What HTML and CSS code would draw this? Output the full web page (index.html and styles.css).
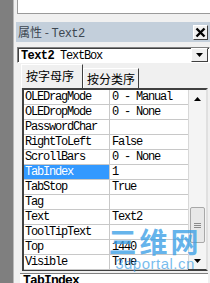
FILE: index.html
```html
<!DOCTYPE html>
<html>
<head>
<meta charset="utf-8">
<link rel="stylesheet" href="styles.css">
</head>
<body>
<div class="app">
  <div class="strip"></div>
  <div class="panel">
    <div class="topbox"></div>
    <div class="titlebar">
      <span class="title">属性 - <span class="mono">Text2</span></span>
      <span class="close"><svg width="11" height="11" viewBox="0 0 11 11"><path d="M1.5 1.5 L9.5 9.5 M9.5 1.5 L1.5 9.5" stroke="#000" stroke-width="2.4"/></svg></span>
    </div>
    <div class="combo">
      <span class="combotext"><b>Text2</b> TextBox</span>
      <span class="drop"><svg width="7" height="4" viewBox="0 0 7 4"><path d="M0 0 H7 L3.5 4 Z" fill="#000"/></svg></span>
    </div>
    <div class="tabs">
      <span class="tab active">按字母序</span>
      <span class="tab">按分类序</span>
    </div>
    <div class="grid">
      <div class="rows">
        <div class="row"><span class="name">OLEDragMode</span><span class="val">0 - Manual</span></div>
        <div class="row"><span class="name">OLEDropMode</span><span class="val">0 - None</span></div>
        <div class="row"><span class="name">PasswordChar</span><span class="val"></span></div>
        <div class="row"><span class="name">RightToLeft</span><span class="val">False</span></div>
        <div class="row"><span class="name">ScrollBars</span><span class="val">0 - None</span></div>
        <div class="row"><span class="name sel">TabIndex</span><span class="val">1</span></div>
        <div class="row"><span class="name">TabStop</span><span class="val">True</span></div>
        <div class="row"><span class="name">Tag</span><span class="val"></span></div>
        <div class="row"><span class="name">Text</span><span class="val">Text2</span></div>
        <div class="row"><span class="name">ToolTipText</span><span class="val"></span></div>
        <div class="row"><span class="name">Top</span><span class="val">1440</span></div>
        <div class="row"><span class="name">Visible</span><span class="val">True</span></div>
      </div>
      <div class="scroll">
        <div class="sbtn"><svg width="7" height="4" viewBox="0 0 7 4"><path d="M0 4 H7 L3.5 0 Z" fill="#000"/></svg></div>
        <div class="track"><div class="thumb"><svg width="7" height="7" viewBox="0 0 7 7"><path d="M0 1.5 H7 M0 3.5 H7 M0 5.5 H7" stroke="#8a8a8a" stroke-width="1"/></svg></div></div>
        <div class="sbtn"><svg width="7" height="4" viewBox="0 0 7 4"><path d="M0 0 H7 L3.5 4 Z" fill="#000"/></svg></div>
      </div>
    </div>
    <div class="desc"><b>TabIndex</b></div>
  </div>
  <div class="watermark">
    <div class="wm-big">三维网</div>
    <div class="wm-small">3dportal.cn</div>
  </div>
</div>
</body>
</html>
```
FILE: styles.css
```css
html, body {
  margin: 0;
  padding: 0;
  width: 210px;
  height: 283px;
  overflow: hidden;
  background: #f0f0f0;
}
.app {
  position: relative;
  display: flex;
  width: 210px;
  height: 283px;
  overflow: hidden;
}
.strip {
  width: 13px;
  flex: none;
  background: #7f7f7f;
  border-right: 1px solid #b8b8b8;
}
.panel {
  flex: 1;
  display: flex;
  flex-direction: column;
  padding-left: 2px;
  min-width: 0;
}
.mono, .combotext, .row, .desc {
  font-family: "Liberation Mono", "DejaVu Sans Mono", monospace;
  font-size: 12px;
  letter-spacing: -1.2px;
  color: #000;
}
.topbox {
  height: 13px;
  margin-left: 1px;
  background: #fff;
  border-left: 1px solid #9a9a9a;
  border-bottom: 1px solid #9a9a9a;
  flex: none;
}
.titlebar {
  margin-top: 8px;
  height: 20px;
  background: #c3cfdb;
  display: flex;
  align-items: center;
  justify-content: space-between;
  flex: none;
}
.title {
  font-family: "Noto Sans CJK SC", sans-serif;
  font-size: 12px;
  color: #3c4650;
  padding-left: 2px;
}
.title .mono {
  color: #3c4650;
  letter-spacing: -0.6px;
}
.close {
  width: 13px;
  height: 13px;
  margin-right: 2px;
  background: #f0f0f0;
  border: 1px solid;
  border-color: #fff #404040 #404040 #fff;
  display: flex;
  align-items: center;
  justify-content: center;
}
.combo {
  margin-top: 5px;
  margin-left: 1px;
  height: 14px;
  background: #fff;
  border: 1px solid;
  border-color: #808080 #fff #fff #808080;
  box-shadow: inset 1px 1px 0 #404040;
  display: flex;
  align-items: center;
  justify-content: space-between;
  flex: none;
}
.combotext {
  padding-left: 3px;
  padding-top: 1px;
  line-height: 14px;
}
.combotext b {
  letter-spacing: -0.6px;
}
.drop {
  width: 15px;
  height: 12px;
  background: #f0f0f0;
  border: 1px solid;
  border-color: #fff #404040 #404040 #fff;
  display: flex;
  align-items: center;
  justify-content: center;
  margin-right: 1px;
}
.tabs {
  display: flex;
  align-items: flex-end;
  height: 24px;
  padding-left: 5px;
  margin-top: 1px;
  flex: none;
}
.tab {
  font-family: "Noto Sans CJK SC", sans-serif;
  font-size: 12px;
  line-height: 16px;
  color: #000;
  padding: 2px 3px 1px 3px;
  border-left: 1px solid #fff;
  border-top: 1px solid #fff;
  border-right: 1px solid #404040;
}
.tab.active {
  padding: 3px 8px 4px 4px;
}
.grid {
  margin-left: 6px;
  margin-right: 2px;
  height: 179px;
  flex: none;
  display: flex;
  background: #fff;
  border: 2px solid;
  border-color: #404040 #e0e0e0 #404040 #404040;
}
.rows {
  flex: 1;
  display: flex;
  flex-direction: column;
}
.row {
  display: flex;
  height: 15px;
  flex: none;
  line-height: 14px;
  border-bottom: 1px solid #c8c8c8;
  box-sizing: border-box;
  white-space: nowrap;
}
.name {
  width: 84px;
  flex: none;
  padding-left: 1px;
  border-right: 1px solid #c8c8c8;
  overflow: hidden;
}
.name.sel {
  background: #3399ff;
  color: #fff;
}
.val {
  flex: 1;
  padding-left: 2px;
  overflow: hidden;
}
.scroll {
  width: 17px;
  flex: none;
  display: flex;
  flex-direction: column;
  background: #f4f4f4;
  border-left: 1px solid #d8d8d8;
}
.sbtn {
  height: 17px;
  flex: none;
  display: flex;
  align-items: center;
  justify-content: center;
}
.track {
  flex: 1;
  display: flex;
  flex-direction: column;
}
.thumb {
  margin-top: 100px;
  height: 34px;
  margin-left: 1px;
  margin-right: 1px;
  background: #e8e8e8;
  border: 1px solid #a8a8a8;
  border-radius: 2px;
  display: flex;
  align-items: center;
  justify-content: center;
}
.desc {
  margin-top: 2px;
  margin-left: 4px;
  margin-right: 2px;
  height: 20px;
  background: #fff;
  border-top: 1px solid #808080;
  padding-left: 3px;
  font-size: 13px;
  letter-spacing: -0.8px;
  line-height: 14px;
}
.watermark {
  position: absolute;
  left: 108px;
  top: 226px;
  width: 94px;
  text-align: center;
  pointer-events: none;
}
.wm-big {
  font-family: "Noto Sans CJK SC", sans-serif;
  font-weight: 700;
  font-size: 28px;
  line-height: 31px;
  letter-spacing: 3px;
  color: rgba(60, 160, 230, 0.8);
}
.wm-small {
  font-family: "Liberation Sans", sans-serif;
  font-size: 15px;
  line-height: 14px;
  letter-spacing: 0.5px;
  color: rgba(60, 160, 230, 0.7);
}
```
